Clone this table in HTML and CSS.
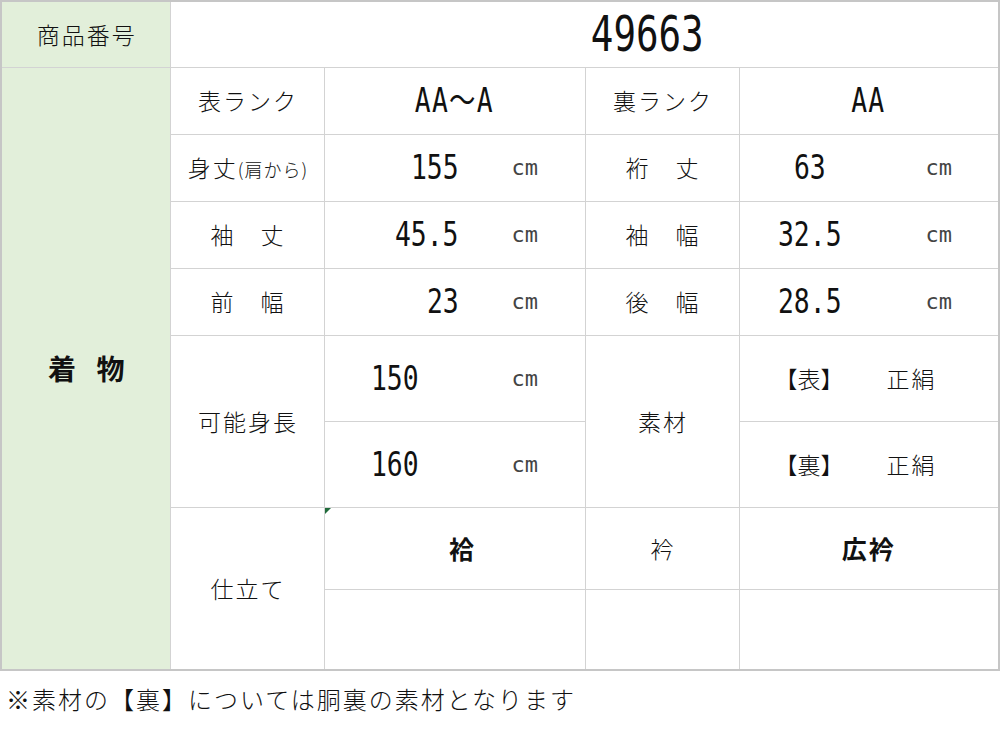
FILE: index.html
```html
<!DOCTYPE html>
<html lang="ja">
<head>
<meta charset="utf-8">
<title>商品番号 49663</title>
<link rel="stylesheet" href="styles.css">
</head>
<body>
<table class="sheet">
  <colgroup>
    <col class="c1"><col class="c2"><col class="c3"><col class="c4"><col class="c5">
  </colgroup>
  <tr class="r-top">
    <td class="green lbl">商品番号</td>
    <td class="code" colspan="4"><span class="d d-big">49663</span></td>
  </tr>
  <tr class="r-std">
    <td class="green group" rowspan="8">着&nbsp;物</td>
    <td class="lbl">表ランク</td>
    <td><span class="d d-rank">AA～A</span></td>
    <td class="lbl">裏ランク</td>
    <td><span class="d d-rank">AA</span></td>
  </tr>
  <tr class="r-std">
    <td class="lbl">身丈<span class="small">(肩から)</span></td>
    <td class="vl"><span class="num"><span class="d">155</span></span><span class="unit">cm</span></td>
    <td class="lbl">裄　丈</td>
    <td class="vr"><span class="num"><span class="d">63</span></span><span class="unit">cm</span></td>
  </tr>
  <tr class="r-std">
    <td class="lbl">袖　丈</td>
    <td class="vl"><span class="num"><span class="d">45.5</span></span><span class="unit">cm</span></td>
    <td class="lbl">袖　幅</td>
    <td class="vr"><span class="num"><span class="d">32.5</span></span><span class="unit">cm</span></td>
  </tr>
  <tr class="r-std">
    <td class="lbl">前　幅</td>
    <td class="vl"><span class="num"><span class="d">23</span></span><span class="unit">cm</span></td>
    <td class="lbl">後　幅</td>
    <td class="vr"><span class="num"><span class="d">28.5</span></span><span class="unit">cm</span></td>
  </tr>
  <tr class="r-tall">
    <td class="lbl" rowspan="2">可能身長</td>
    <td class="vh"><span class="num"><span class="d">150</span></span><span class="unit">cm</span></td>
    <td class="lbl" rowspan="2">素材</td>
    <td class="mat"><span class="mat-k">【表】</span><span class="mat-v">正絹</span></td>
  </tr>
  <tr class="r-tall">
    <td class="vh"><span class="num"><span class="d">160</span></span><span class="unit">cm</span></td>
    <td class="mat"><span class="mat-k">【裏】</span><span class="mat-v">正絹</span></td>
  </tr>
  <tr class="r-sew1">
    <td class="lbl" rowspan="2">仕立て</td>
    <td class="bold flag awase">袷</td>
    <td class="lbl">衿</td>
    <td class="bold">広衿</td>
  </tr>
  <tr class="r-sew2">
    <td></td>
    <td></td>
    <td></td>
  </tr>
</table>
<p class="note">※素材の【裏】については胴裏の素材となります</p>
</body>
</html>
```

FILE: styles.css
```css
* { box-sizing: border-box; }

body {
  margin: 0;
  background: #ffffff;
  color: #111111;
  font-family: "Noto Sans CJK JP", "Noto Sans", sans-serif;
}

.sheet {
  border-collapse: collapse;
  table-layout: fixed;
  width: 998px;
  border: 2px solid #c6c6c6;
}

.c1 { width: 169px; }
.c2 { width: 154px; }
.c3 { width: 261px; }
.c4 { width: 154px; }
.c5 { width: 260px; }

.r-top { height: 66px; }
.r-std { height: 67px; }
.r-tall { height: 86px; }
.r-sew1 { height: 82px; }
.r-sew2 { height: 81px; }

.sheet td {
  border: 1px solid #d3d3d3;
  padding: 0;
  text-align: center;
  vertical-align: middle;
  font-size: 23px;
  line-height: 1;
  letter-spacing: 2px;
  white-space: nowrap;
  font-weight: 300;
}

.sheet .green { background: #e2efda; }

.sheet .lbl { padding-left: 2px; }

.sheet .group {
  font-size: 28px;
  font-weight: 700;
  letter-spacing: 7px;
  padding-left: 8px;
}

.small {
  font-size: 18px;
  letter-spacing: 1px;
}

.sheet .bold {
  font-weight: 700;
  font-size: 25px;
}

.sheet .awase { padding-left: 16px; }

.flag { position: relative; }
.flag::before {
  content: "";
  position: absolute;
  left: 0;
  top: 0;
  border-top: 6px solid #1f6b3a;
  border-right: 6px solid transparent;
}

/* digits: half-width monospace, narrowed */
.d {
  display: inline-block;
  font-family: "DejaVu Sans Mono", "Noto Sans CJK JP", monospace;
  font-size: 33px;
  font-weight: 400;
  letter-spacing: 0;
  transform: scaleX(0.8);
  transform-origin: right center;
  color: #111;
}

.d-big {
  font-size: 50px;
  transform: scaleX(0.75);
  transform-origin: center center;
}

.d-rank {
  transform-origin: center center;
  letter-spacing: 1.5px;
}

.sheet .code {
  padding-left: 126px;
  letter-spacing: 0;
}

.sheet .vl, .sheet .vr, .sheet .vh, .sheet .mat {
  text-align: left;
  letter-spacing: 0;
}

.num { display: inline-block; }

.vl .num { width: 134px; text-align: right; }
.vl .unit { margin-left: 53px; }

.vh .num { width: 140px; text-align: center; }
.vh .num .d { transform-origin: center center; }
.vh .unit { margin-left: 47px; }

.vr .num { width: 141px; text-align: center; }
.vr .num .d { transform-origin: center center; }
.vr .unit { margin-left: 45px; }

.unit {
  display: inline-block;
  font-family: "DejaVu Sans Mono", monospace;
  font-size: 22px;
  font-weight: 400;
  color: #444;
  vertical-align: 4px;
}

.sheet .mat { padding-left: 35px; }
.mat-k { letter-spacing: 0; }
.mat-v { margin-left: 43px; letter-spacing: 2px; }

.note {
  margin: 0;
  padding: 13px 0 0 6px;
  font-size: 24px;
  font-weight: 300;
  line-height: 30px;
  letter-spacing: 2px;
  color: #111;
}
```
